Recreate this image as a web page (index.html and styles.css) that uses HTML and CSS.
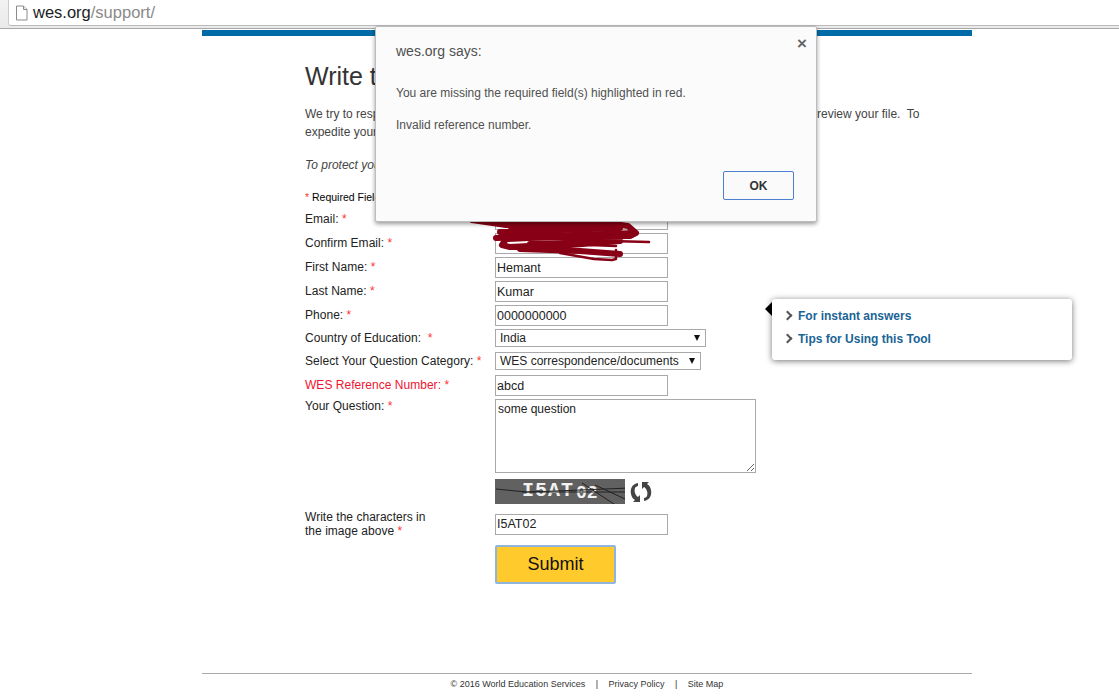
FILE: index.html
```html
<!DOCTYPE html>
<html lang="en">
<head>
  <meta charset="UTF-8" />
  <meta name="viewport" content="width=device-width, initial-scale=1" />
  <title>Write to Us</title>
  <link rel="stylesheet" href="styles.css">
</head>
<body>

  <div class="addressBar">
    <div class="addressField">
      <svg class="pageIcon" width="13" height="16" viewBox="0 0 13 16">
        <path d="M1.500 1h7l3.500 3.500v10.500h-10.500z" fill="#fff" stroke="#8a8a8a"/>
        <path d="M8.500 1v3.500h3.500" fill="#e8e8e8" stroke="#8a8a8a"/>
      </svg>
      <span class="host">wes.org</span><span class="path">/support/</span>
    </div>
  </div>

  <div class="page">
    <div class="topStripe"></div>

    <main class="content">
      <h1>Write to Us</h1>
      <p class="intro">We try to respond to all your questions as quickly as we possibly can, but we might need time to review your file.&nbsp; To expedite your request, please fill in all of the fields below.</p>
      <p class="privacy">To protect your privacy, please do not include personal data.</p>
      <p class="required"><span class="star">*</span> Required Fields</p>

      <form class="supportForm">
        <label>Email: <span class="star">*</span></label>
        <input type="text" value="">

        <label>Confirm Email: <span class="star">*</span></label>
        <input type="text" value="">

        <label>First Name: <span class="star">*</span></label>
        <input type="text" value="Hemant">

        <label>Last Name: <span class="star">*</span></label>
        <input type="text" value="Kumar">

        <label>Phone: <span class="star">*</span></label>
        <input type="text" value="0000000000">

        <label>Country of Education: &nbsp;<span class="star">*</span></label>
        <div class="fakeSelect country"><span>India</span><i></i></div>

        <label>Select Your Question Category: <span class="star">*</span></label>
        <div class="fakeSelect category"><span>WES correspondence/documents</span><i></i></div>

        <label class="invalid">WES Reference Number: <span class="star">*</span></label>
        <input type="text" value="abcd">

        <label class="topLabel">Your Question: <span class="star">*</span></label>
        <textarea>some question</textarea>

        <div></div>
        <div class="captchaRow">
          <div class="captcha">
            <span class="captchaText">I5AT</span><span class="captchaLow">02</span>
            <svg class="captchaLines" width="130" height="25" viewBox="0 0 130 25">
              <path d="M1 10l30 3 30-1 74-3M27 13h105M87 4l35 23M100 6l30 14" fill="none" stroke="#222" stroke-width="1"/>
            </svg>
          </div>
          <svg width="26" height="24" viewBox="0 0 26 24">
            <path d="M10 3C4 4 2 9 3 14c.5 3 2 5 4 6l-2 2h7v-7l-2 2c-3-2-4-6-3-9 .5-1 2-2 3-2z" fill="#444"/>
            <path d="M16 21c6-1 8-6 7-11-.5-3-2-5-4-6l2-2h-7v7l2-2c3 2 4 6 3 9-.5 1-2 2-3 2z" fill="#444"/>
          </svg>
        </div>

        <label class="twoLine">Write the characters in<br>the image above <span class="star">*</span></label>
        <input class="captchaInput" type="text" value="I5AT02">

        <div></div>
        <button type="button" class="submitBtn">Submit</button>
      </form>
    </main>

    <footer class="footer">
      © 2016 World Education Services <span class="sep">|</span> Privacy Policy <span class="sep">|</span> Site Map
    </footer>
  </div>

  <svg class="scribble" width="185" height="50" viewBox="0 0 185 50">
    <path d="M2 2l34 5 30-2 40 1 30-1 22 3 8 7-6 3-120 1 126-4-130 6-4 6 8 2 110-6-100 8 60 2 40 3" fill="none" stroke="#880015" stroke-width="6" stroke-linecap="round" stroke-linejoin="round"/>
    <path d="M30 14l120-4M26 20l130-2M40 8l110 0M60 26l70-2" fill="none" stroke="#880015" stroke-width="6" stroke-linecap="round"/>
    <path d="M140 23l39 1M120 27l26 1M146 32v9l-4 1-18-1-34-6" fill="none" stroke="#880015" stroke-width="2.500" stroke-linecap="round" stroke-linejoin="round"/>
  </svg>

  <aside class="helpBox">
    <span class="helpArrow"></span>
    <a href="#"><b class="chevron"></b>For instant answers</a>
    <a href="#"><b class="chevron"></b>Tips for Using this Tool</a>
  </aside>

  <div class="dialog">
    <div class="dialogClose">×</div>
    <div class="dialogTitle">wes.org says:</div>
    <p>You are missing the required field(s) highlighted in red.</p>
    <p>Invalid reference number.</p>
    <div class="dialogButtons"><button type="button">OK</button></div>
  </div>

</body>
</html>
```

FILE: styles.css
```css
body {
  background-color: #fff;
  font-family: 'Liberation Sans', Arial, sans-serif;
  margin: 0;
  color: #222;
  height: 697px;
  overflow: hidden;
}

.addressBar {
  height: 29px;
  box-sizing: border-box;
  padding-left: 8px;
  background: linear-gradient(#f2f2f2, #eaeaea);
  border-bottom: 1px solid #a8a8a8;
}

.addressField {
  height: 25px;
  background: #fff;
  border-bottom: 1px solid #bbb;
  border-left: 1px solid #ccc;
  border-radius: 0 0 0 3px;
  display: flex;
  align-items: center;
  padding-left: 6px;
  font-size: 16.500px;
}

.pageIcon {
  margin-right: 5px;
}

.host {
  color: #222;
}

.path {
  color: #8a8a8a;
}

.page {
  width: 770px;
  margin-left: 202px;
  padding-top: 1px;
}

.topStripe {
  height: 6px;
  background-color: #006ba6;
}

.content {
  padding-left: 103px;
  height: 637px;
}

h1 {
  font-size: 25px;
  font-weight: normal;
  margin: 0;
  padding-top: 26px;
  line-height: 29px;
  color: #333;
}

.intro {
  width: 620px;
  font-size: 12px;
  line-height: 18px;
  margin: 14px 0 0;
  color: #444;
}

.privacy {
  font-size: 12px;
  font-style: italic;
  line-height: 18px;
  margin: 15px 0 0;
  color: #444;
}

.required {
  font-size: 10.500px;
  line-height: 14px;
  margin: 16px 0 0;
  color: #000;
}

.star {
  color: #f33;
}

.supportForm {
  display: grid;
  grid-template-columns: 190px 1fr;
  grid-auto-rows: min-content;
  align-items: center;
  row-gap: 3px;
  margin-top: 5px;
}

label {
  font-size: 12px;
  letter-spacing: 0.03px;
  color: #222;
  padding-bottom: 2px;
}

label.invalid {
  color: #f0142f;
}

label.topLabel {
  align-self: start;
}

input, textarea {
  box-sizing: border-box;
  font-family: 'Liberation Sans', Arial, sans-serif;
  color: #222;
  border: 1px solid #a9a9a9;
  border-radius: 0;
  outline: none;
  background: #fff;
}

input {
  width: 173px;
  height: 21px;
  padding: 0 1px;
  font-size: 12.500px;
}

textarea {
  width: 261px;
  height: 74px;
  padding: 2px;
  font-size: 12px;
}

.fakeSelect {
  box-sizing: border-box;
  height: 18px;
  margin-bottom: 2px;
  border: 1px solid #a9a9a9;
  font-size: 12px;
  display: flex;
  align-items: center;
  justify-content: space-between;
  padding: 0 5px 0 4px;
}

.fakeSelect i {
  width: 0;
  height: 0;
  border-left: 3px solid transparent;
  border-right: 3px solid transparent;
  border-top: 6px solid #111;
}

.country {
  width: 211px;
}

.category {
  width: 206px;
}

.captchaRow {
  display: flex;
  align-items: center;
  gap: 3px;
  margin-top: 3px;
}

.captcha {
  width: 130px;
  height: 25px;
  background: #616161;
  position: relative;
  box-sizing: border-box;
  padding-left: 27px;
  color: #f2f2f2;
  font-family: 'Liberation Mono', monospace;
  font-weight: bold;
  font-size: 20px;
  line-height: 23px;
  white-space: nowrap;
}

.captchaText {
  letter-spacing: 1px;
}

.captchaLow {
  font-size: 18px;
  position: relative;
  top: 2px;
  margin-left: 2px;
}

.captchaLines {
  position: absolute;
  left: 0;
  top: 0;
}

.twoLine {
  line-height: 14px;
  margin-top: 3px;
  padding-bottom: 0;
}

.captchaInput {
  margin-top: 3px;
}

.submitBtn {
  box-sizing: border-box;
  width: 121px;
  height: 39px;
  margin-top: 4px;
  background: #ffca2c;
  border: 2px solid #8fb4de;
  border-radius: 2px;
  font-family: 'Liberation Sans', Arial, sans-serif;
  font-size: 18px;
  color: #111;
}

.footer {
  border-top: 1px solid #aaa;
  padding-top: 5px;
  text-align: center;
  font-size: 9px;
  color: #333;
}

.sep {
  margin: 0 8px;
}

.scribble {
  position: absolute;
  left: 470px;
  top: 218px;
}

.helpBox {
  position: absolute;
  left: 772px;
  top: 299px;
  width: 300px;
  height: 61px;
  box-sizing: border-box;
  padding: 5px 0 0 12px;
  background: #fff;
  border-radius: 3px;
  box-shadow: 0 1px 6px rgba(0, 0, 0, 0.55);
}

.helpBox a {
  display: flex;
  align-items: center;
  height: 23px;
  font-size: 12px;
  font-weight: bold;
  color: #1a6496;
  text-decoration: none;
}

.chevron {
  width: 5px;
  height: 5px;
  border-top: 2.500px solid #555;
  border-right: 2.500px solid #555;
  transform: rotate(45deg);
  margin-right: 7px;
}

.helpArrow {
  position: absolute;
  left: -7px;
  top: 3px;
  width: 0;
  height: 0;
  border-top: 7px solid transparent;
  border-bottom: 7px solid transparent;
  border-right: 7px solid #000;
}

.dialog {
  position: absolute;
  left: 375px;
  top: 26px;
  width: 442px;
  height: 196px;
  box-sizing: border-box;
  padding: 16px 20px 0;
  background: #fbfbfb;
  border: 1px solid #bdbdbd;
  border-radius: 2px;
  box-shadow: 0 2px 4px rgba(0, 0, 0, 0.4);
  color: #505050;
  font-size: 12px;
}

.dialogClose {
  position: absolute;
  right: 9px;
  top: 7px;
  font-size: 17px;
  font-weight: bold;
  color: #666;
}

.dialogTitle {
  font-size: 14px;
  line-height: 17px;
  margin-bottom: 26px;
}

.dialog p {
  margin: 0 0 18px;
  line-height: 14px;
}

.dialogButtons {
  position: absolute;
  right: 22px;
  bottom: 21px;
}

.dialogButtons button {
  width: 71px;
  height: 29px;
  background: #fafafa;
  border: 1px solid #4d7fd0;
  border-radius: 2px;
  font-family: 'Liberation Sans', Arial, sans-serif;
  font-size: 12px;
  font-weight: bold;
  color: #333;
}
```
